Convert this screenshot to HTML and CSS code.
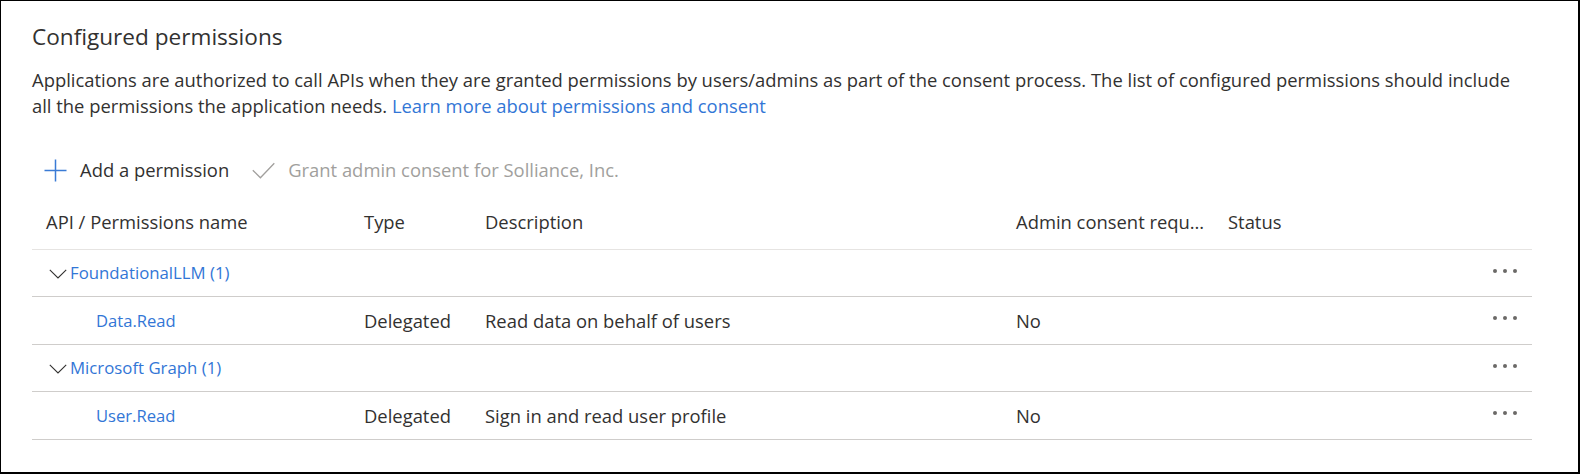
FILE: index.html
```html
<!DOCTYPE html>
<html lang="en">
<head>
<meta charset="utf-8">
<title>Configured permissions</title>
<link rel="stylesheet" href="styles.css">
</head>
<body>
<div class="frame">
  <h2 class="title">Configured permissions</h2>
  <p class="intro"><span>Applications are authorized to call APIs when they are granted permissions by users/admins as part of the consent process. The list of configured permissions should include</span><br><span>all the permissions the application needs.</span> <a class="link" href="#">Learn more about permissions and consent</a></p>

  <div class="toolbar">
    <button class="tool tool-add" type="button">
      <svg class="tool-icon" width="23" height="23" viewBox="0 0 23 23" aria-hidden="true"><path d="M11.5 0.5v22M0.5 11.5h22" fill="none" stroke="#3a7bd5" stroke-width="1.5"/></svg>
      <span>Add a permission</span>
    </button>
    <button class="tool tool-disabled" type="button">
      <svg class="tool-icon" width="23" height="22" viewBox="0 0 23 22" aria-hidden="true"><path d="M0.8 11.2l7.6 7.6L22.3 4.2" fill="none" stroke="#a19f9d" stroke-width="1.3"/></svg>
      <span>Grant admin consent for Solliance, Inc.</span>
    </button>
  </div>

  <div class="table">
    <div class="row head">
      <div class="cell">API / Permissions name</div>
      <div class="cell">Type</div>
      <div class="cell">Description</div>
      <div class="cell">Admin consent requ…</div>
      <div class="cell">Status</div>
      <div class="cell"></div>
    </div>

    <div class="group">
      <svg class="chev" width="18" height="12" viewBox="0 0 18 12" aria-hidden="true"><path d="M0.8 1.8l8.2 8.2 8.2-8.2" fill="none" stroke="#323130" stroke-width="1.1"/></svg>
      <a class="link group-link" href="#">FoundationalLLM (1)</a>
      <div class="more"><i></i><i></i><i></i></div>
    </div>
    <div class="row item">
      <div class="cell name"><a class="link small-link" href="#">Data.Read</a></div>
      <div class="cell">Delegated</div>
      <div class="cell">Read data on behalf of users</div>
      <div class="cell">No</div>
      <div class="cell"></div>
      <div class="more"><i></i><i></i><i></i></div>
    </div>

    <div class="group">
      <svg class="chev" width="18" height="12" viewBox="0 0 18 12" aria-hidden="true"><path d="M0.8 1.8l8.2 8.2 8.2-8.2" fill="none" stroke="#323130" stroke-width="1.1"/></svg>
      <a class="link group-link" href="#">Microsoft Graph (1)</a>
      <div class="more"><i></i><i></i><i></i></div>
    </div>
    <div class="row item">
      <div class="cell name"><a class="link small-link" href="#">User.Read</a></div>
      <div class="cell">Delegated</div>
      <div class="cell">Sign in and read user profile</div>
      <div class="cell">No</div>
      <div class="cell"></div>
      <div class="more"><i></i><i></i><i></i></div>
    </div>
  </div>
</div>
</body>
</html>
```
FILE: styles.css
```css
* { box-sizing: border-box; }

html, body {
  margin: 0;
  padding: 0;
  background: #ffffff;
}

body {
  font-family: "Open Sans", "Noto Sans", sans-serif;
  font-size: 18.4px;
  line-height: 26px;
  color: #323130;
}

.frame {
  width: 1580px;
  height: 474px;
  border-style: solid;
  border-color: #000000;
  border-width: 1px 2px 2px 1px;
  padding: 21px 0 0 31px;
  overflow: hidden;
}

.title {
  margin: 0;
  font-size: 22.6px;
  line-height: 30px;
  font-weight: 400;
  color: #323130;
}

.intro {
  margin: 15px 0 0 0;
  width: 1500px;
  white-space: nowrap;
}

.link {
  color: #3276d6;
  text-decoration: none;
}

.toolbar {
  display: flex;
  align-items: center;
  height: 44px;
  margin-top: 29px;
  padding-left: 12px;
  gap: 23px;
}

.tool {
  display: flex;
  align-items: center;
  gap: 13px;
  padding: 0;
  border: 0;
  background: none;
  font: inherit;
  color: #323130;
  cursor: pointer;
}

.tool-icon { display: block; flex: none; }

.tool-disabled { color: #a19f9d; cursor: default; }

.table {
  width: 1500px;
}

.row {
  display: grid;
  grid-template-columns: 318px 121px 531px 212px 1fr 52px;
  align-items: center;
}

.cell {
  padding-left: 14px;
  white-space: nowrap;
  overflow: hidden;
}

.head {
  padding: 17px 0 14px 0;
  border-bottom: 1px solid #e6e4e2;
}

.item {
  height: 48px;
  border-bottom: 1px solid #cfcdcb;
}

.item .name { padding-left: 64px; }

.small-link {
  font-size: 16.6px;
}

.group {
  display: flex;
  align-items: center;
  height: 47px;
  border-bottom: 1px solid #cfcdcb;
  padding-left: 17px;
}

.chev { display: block; flex: none; margin-right: 3px; margin-top: 1px; }

.group-link {
  font-size: 16.8px;
  line-height: 24px;
}

.more {
  display: flex;
  justify-content: flex-end;
  align-items: center;
  gap: 6px;
  padding-right: 15px;
  padding-bottom: 5px;
  margin-left: auto;
}

.more i {
  display: block;
  width: 4px;
  height: 4px;
  border-radius: 50%;
  background: #6b6967;
}
```
